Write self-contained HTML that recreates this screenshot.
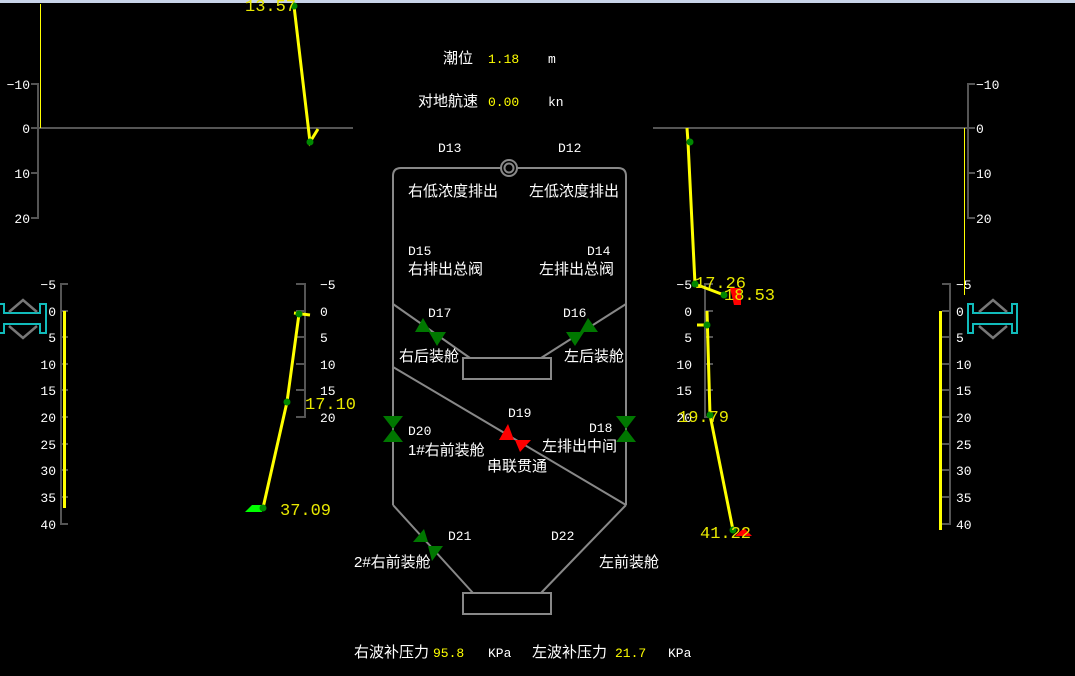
<!DOCTYPE html>
<html><head><meta charset="utf-8"><style>
html,body{margin:0;padding:0;background:#000;width:1075px;height:676px;overflow:hidden}
svg{display:block}
text{font-family:"Liberation Mono","Noto Sans CJK SC",monospace;fill:#fff;font-size:13px}
.c{font-family:"Liberation Sans","Noto Sans CJK SC",sans-serif;font-size:15px}
.y{fill:#ffff00}
.big{font-family:"Liberation Mono","Noto Serif CJK SC",monospace;font-size:17px;fill:#e8e800}
</style></head><body>
<svg width="1075" height="676" viewBox="0 0 1075 676">
<rect x="0" y="0" width="1075" height="3" fill="#c8d4e8"/>
<g stroke="#555" stroke-width="2" fill="none">
<path d="M31 84H38V218H31M31 128H38M31 173H38"/>
<line x1="38" y1="128" x2="353" y2="128"/>
<path d="M975 84H968V218H975M975 128H968M975 173H968"/>
<line x1="653" y1="128" x2="975" y2="128"/>
<path d="M68 284H61V524H68M61 311H68M61 337H68M61 364H68M61 390H68M61 417H68M61 444H68M61 470H68M61 497H68"/>
<path d="M296 284H305V417H296M296 311H305M296 337H305M296 364H305M296 390H305"/>
<path d="M713 284H705V417H713M705 311H713M705 337H713M705 364H713M705 390H713"/>
<path d="M942 284H950V524H942M942 311H950M942 337H950M942 364H950M942 390H950M942 417H950M942 444H950M942 470H950M942 497H950"/>
</g>
<g font-size="13">
<text x="30" y="89" text-anchor="end">−10</text><text x="30" y="133" text-anchor="end">0</text><text x="30" y="178" text-anchor="end">10</text><text x="30" y="223" text-anchor="end">20</text>
<text x="976" y="89">−10</text><text x="976" y="133">0</text><text x="976" y="178">10</text><text x="976" y="223">20</text>
<text x="56" y="289" text-anchor="end">−5</text><text x="56" y="316" text-anchor="end">0</text><text x="56" y="342" text-anchor="end">5</text><text x="56" y="369" text-anchor="end">10</text><text x="56" y="395" text-anchor="end">15</text><text x="56" y="422" text-anchor="end">20</text><text x="56" y="449" text-anchor="end">25</text><text x="56" y="475" text-anchor="end">30</text><text x="56" y="502" text-anchor="end">35</text><text x="56" y="529" text-anchor="end">40</text>
<text x="320" y="289">−5</text><text x="320" y="316">0</text><text x="320" y="342">5</text><text x="320" y="369">10</text><text x="320" y="395">15</text><text x="320" y="422">20</text>
<text x="692" y="289" text-anchor="end">−5</text><text x="692" y="316" text-anchor="end">0</text><text x="692" y="342" text-anchor="end">5</text><text x="692" y="369" text-anchor="end">10</text><text x="692" y="395" text-anchor="end">15</text><text x="692" y="422" text-anchor="end">20</text>
<text x="956" y="289">−5</text><text x="956" y="316">0</text><text x="956" y="342">5</text><text x="956" y="369">10</text><text x="956" y="395">15</text><text x="956" y="422">20</text><text x="956" y="449">25</text><text x="956" y="475">30</text><text x="956" y="502">35</text><text x="956" y="529">40</text>
</g>
<rect x="40" y="4" width="1" height="124" fill="#ff0"/>
<rect x="964" y="128" width="1" height="167" fill="#ff0"/>
<rect x="63" y="311" width="3" height="197" fill="#ff0"/>
<rect x="939" y="311" width="3" height="219" fill="#ff0"/>
<g stroke="#ff0" stroke-width="3" fill="none">
<polyline points="294,6 310,142 318,129"/>
<polyline points="687,128 688,142 695,284 724,295"/>
<polyline points="707,311 710,415 733,530"/>
<line x1="697" y1="325" x2="707" y2="325"/>
<polyline points="299,314 287,402 263,508"/>
<line x1="294" y1="313" x2="310" y2="315"/>
</g>
<path d="M245 512L252 505H262V512Z" fill="#0f0"/>
<path d="M730 288H741V305H734Z" fill="#f00"/>
<path d="M735 536L744 528L752 536Z" fill="#f00"/>
<g fill="#080">
<circle cx="294" cy="6" r="3.5"/><circle cx="310" cy="142" r="3.5"/><circle cx="690" cy="142" r="3.5"/>
<circle cx="695" cy="284" r="3.5"/><circle cx="724" cy="295" r="3.5"/><circle cx="707" cy="325" r="3.5"/>
<circle cx="710" cy="415" r="3.5"/><circle cx="733" cy="530" r="3.5"/>
<circle cx="299" cy="314" r="3.5"/><circle cx="287" cy="402" r="3.5"/><circle cx="263" cy="508" r="3.5"/>
</g>
<text class="big" x="245" y="11">13.57</text>
<text class="big" x="305" y="409">17.10</text>
<text class="big" x="280" y="515">37.09</text>
<text class="big" x="695" y="288">17.26</text>
<text class="big" x="724" y="300">18.53</text>
<text class="big" x="678" y="422">19.79</text>
<text class="big" x="700" y="538">41.22</text>
<g stroke="#1bb" stroke-width="2" fill="none">
<path d="M0 304H4V313H40V304H46V333H40V324H4V333H0"/>
<path d="M968 304H973V313H1012V304H1017V333H1012V324H973V333H968Z"/>
</g>
<g stroke="#777" stroke-width="2.5" fill="none">
<path d="M9 312L23 300L37 312M9 326L23 338L37 326"/>
<path d="M979 312L993 300L1007 312M979 326L993 338L1007 326"/>
</g>
<g stroke="#888" stroke-width="2" fill="none">
<path d="M393 505V176Q393 168 401 168H618Q626 168 626 176V505"/>
<line x1="393" y1="304" x2="470" y2="358"/>
<line x1="626" y1="304" x2="541" y2="358"/>
<line x1="393" y1="367" x2="626" y2="505"/>
<rect x="463" y="358" width="88" height="21"/>
<path d="M393 505L473 593M626 505L541 593"/>
<rect x="463" y="593" width="88" height="21"/>
<circle cx="509" cy="168" r="8" fill="#000"/><circle cx="509" cy="168" r="4.5"/>
</g>
<g fill="#070">
<path d="M423 318L415 332H431ZM437 346L429 332H446Z"/>
<path d="M588 318L580 332H598ZM575 346L566 332H584Z"/>
<path d="M383 416H403L393 429ZM383 442H403L393 429Z"/>
<path d="M616 416H636L626 429ZM616 442H636L626 429Z"/>
<path d="M424 529L413 542L428 542ZM432 561L443 546L428 546Z"/>
</g>
<path d="M508 424L499 440H514ZM520 452L515 440H531Z" fill="#f00"/>
<text class="c" x="443" y="63">潮位</text><text class="y" x="488" y="63">1.18</text><text x="548" y="63">m</text>
<text class="c" x="418" y="106">对地航速</text><text class="y" x="488" y="106">0.00</text><text x="548" y="106">kn</text>
<text x="438" y="152">D13</text><text x="558" y="152">D12</text>
<text class="c" x="408" y="196">右低浓度排出</text><text class="c" x="529" y="196">左低浓度排出</text>
<text x="408" y="255">D15</text><text class="c" x="408" y="274">右排出总阀</text>
<text x="587" y="255">D14</text><text class="c" x="539" y="274">左排出总阀</text>
<text x="428" y="317">D17</text><text class="c" x="399" y="361">右后装舱</text>
<text x="563" y="317">D16</text><text class="c" x="564" y="361">左后装舱</text>
<text x="508" y="417">D19</text>
<text x="408" y="435">D20</text><text class="c" x="408" y="455">1#右前装舱</text>
<text x="589" y="432">D18</text><text class="c" x="542" y="451">左排出中间</text>
<text class="c" x="487" y="471">串联贯通</text>
<text x="448" y="540">D21</text><text x="551" y="540">D22</text>
<text class="c" x="354" y="567">2#右前装舱</text><text class="c" x="599" y="567">左前装舱</text>
<text class="c" x="354" y="657">右波补压力</text><text class="y" x="433" y="657">95.8</text><text x="488" y="657">KPa</text>
<text class="c" x="532" y="657">左波补压力</text><text class="y" x="615" y="657">21.7</text><text x="668" y="657">KPa</text>
</svg>
</body></html>
